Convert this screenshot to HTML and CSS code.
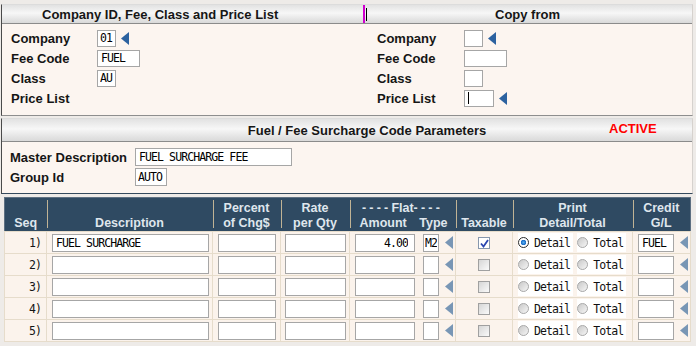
FILE: index.html
```html
<!DOCTYPE html>
<html lang="en">
<head>
    <meta charset="UTF-8">
    <title>Fuel / Fee Surcharge Code Parameters</title>
    <link rel="stylesheet" href="styles.css">
</head>
<body>
    <div class="screen">
        <!-- key fields + copy from -->
        <section class="panel panel-keys">
            <div class="bar bar-split">
                <div class="bar-left">Company ID, Fee, Class and Price List</div>
                <span class="mark-magenta"></span><span class="mark-caret"></span>
                <div class="bar-right">Copy from</div>
            </div>
            <div class="panel-body keys-body">
                <div class="fields fields-left">
                    <label>Company</label>
                    <div class="fld-line"><input class="fld w19" value="01"><svg class="arrow" width="8" height="13"><path d="M8 0L0 6.5L8 13Z"/></svg></div>
                    <label>Fee Code</label>
                    <div class="fld-line"><input class="fld w43" value="FUEL"></div>
                    <label>Class</label>
                    <div class="fld-line"><input class="fld w19" value="AU"></div>
                    <label>Price List</label>
                    <div class="fld-line"></div>
                </div>
                <div class="fields fields-right">
                    <label>Company</label>
                    <div class="fld-line"><input class="fld w19" value=""><svg class="arrow" width="8" height="13"><path d="M8 0L0 6.5L8 13Z"/></svg></div>
                    <label>Fee Code</label>
                    <div class="fld-line"><input class="fld w43" value=""></div>
                    <label>Class</label>
                    <div class="fld-line"><input class="fld w19" value=""></div>
                    <label>Price List</label>
                    <div class="fld-line"><span class="fld fld-box w30"><span class="caret"></span></span><svg class="arrow" width="8" height="13"><path d="M8 0L0 6.5L8 13Z"/></svg></div>
                </div>
            </div>
        </section>

        <!-- parameters -->
        <section class="panel panel-params">
            <div class="bar bar-params">
                <div class="bar-title">Fuel / Fee Surcharge Code Parameters</div>
                <div class="status">ACTIVE</div>
            </div>
            <div class="panel-body params-body">
                <label>Master Description</label>
                <div class="fld-line"><input class="fld w157" value="FUEL SURCHARGE FEE"></div>
                <label>Group Id</label>
                <div class="fld-line"><input class="fld w32" value="AUTO"></div>
            </div>
        </section>

        <table class="grid">
            <colgroup>
                <col style="width:42px"><col style="width:166px"><col style="width:68px"><col style="width:69px">
                <col style="width:106px"><col style="width:57px"><col style="width:120px"><col style="width:58px">
            </colgroup>
            <thead>
                <tr>
                    <th class="first"><br>Seq</th>
                    <th><br>Description</th>
                    <th>Percent<br>of Chg$</th>
                    <th>Rate<br>per Qty</th>
                    <th><span class="dashes">----</span>Flat<span class="dashes">----</span><div class="th-split"><span>Amount</span><span>Type</span></div></th>
                    <th><br>Taxable</th>
                    <th>Print<br>Detail/Total</th>
                    <th>Credit<br>G/L</th>
                </tr>
            </thead>
            <tbody id="rows"></tbody>
        </table>
    </div>

    <script>
        const rows = [
            { desc: 'FUEL SURCHARGE', amount: '4.00', type: 'M2', taxable: true, detail: true, gl: 'FUEL' },
            { desc: '', amount: '', type: '', taxable: false, detail: false, gl: '' },
            { desc: '', amount: '', type: '', taxable: false, detail: false, gl: '' },
            { desc: '', amount: '', type: '', taxable: false, detail: false, gl: '' },
            { desc: '', amount: '', type: '', taxable: false, detail: false, gl: '' }
        ];

        const arrow = '<svg class="arrow arrow-light" width="8" height="13"><path d="M8 0L0 6.5L8 13Z"/></svg>';
        const check = '<svg width="9" height="9" viewBox="0 0 9 9"><path d="M1 4.5L3.5 7.5L8 1" fill="none" stroke="#2a45b0" stroke-width="1.8"/></svg>';

        const body = document.getElementById('rows');
        rows.forEach((r, i) => {
            const tr = document.createElement('tr');
            tr.innerHTML = `
                <td class="seq">${i + 1})</td>
                <td class="pad"><input class="fld w157" value="${r.desc}"></td>
                <td class="mid"><input class="fld w58" value=""></td>
                <td class="mid"><input class="fld w61" value=""></td>
                <td class="pad"><div class="cell-row"><input class="fld w60 num" value="${r.amount}"><input class="fld w16" value="${r.type}">${arrow}</div></td>
                <td class="mid"><span class="chk ${r.taxable ? 'on' : ''}">${r.taxable ? check : ''}</span></td>
                <td class="pad"><div class="cell-row radios">
                    <span class="opt"><span class="radio ${r.detail ? 'on' : ''}"></span>Detail</span>
                    <span class="opt"><span class="radio"></span>Total</span>
                </div></td>
                <td class="pad"><div class="cell-row"><input class="fld w36" value="${r.gl}">${arrow}</div></td>`;
            body.appendChild(tr);
        });
    </script>
</body>
</html>
```

FILE: styles.css
```css
body {
    margin: 0;
    width: 696px;
    height: 346px;
    overflow: hidden;
    background-color: #eeebe8;
    font-family: "Liberation Sans", Arial, sans-serif;
    color: #151515;
}

.screen {
    padding-top: 4px;
}

.panel {
    margin-left: 1px;
    width: 690px;
    border-left: 1px solid #4a4a4a;
    border-right: 1px solid #d6d2ce;
    border-top: 1px solid #dcdcdc;
}

.bar {
    background: linear-gradient(#e2e2e2, #f7f7f7 45%, #d9d9d9);
    border-bottom: 1px solid #8b8b8b;
    font-size: 13px;
    font-weight: 700;
    color: #161616;
    display: flex;
    align-items: center;
}

.bar-split {
    height: 18px;
}

.bar-left {
    width: 361px;
    padding-left: 40px;
    box-sizing: border-box;
}

.mark-magenta {
    width: 2px;
    height: 18px;
    background-color: #d000d0;
}

.mark-caret {
    width: 1px;
    height: 13px;
    margin-left: 1px;
    background-color: #000;
}

.bar-right {
    flex: 1;
    text-align: center;
    padding-right: 4px;
}

.panel-body {
    background-color: #fcf5f0;
}

.panel-keys {
    border-bottom: 1px solid #8e8e8e;
}

.keys-body {
    display: flex;
    height: 91px;
    box-sizing: border-box;
    padding: 4px 0 0 9px;
}

.fields {
    display: grid;
    grid-template-columns: 86px auto;
    grid-auto-rows: 20px;
    align-items: center;
    font-size: 13px;
    font-weight: 700;
}

.fields-left {
    width: 366px;
}

.fields-right {
    grid-template-columns: 87px auto;
}

.fld-line {
    display: flex;
    align-items: center;
    gap: 5px;
}

.fld {
    height: 17px;
    box-sizing: border-box;
    border: 1px solid #a6a6a6;
    background-color: #fff;
    padding: 0 3px;
    margin: 0;
    font-family: "DejaVu Sans Mono", monospace;
    font-size: 11.5px;
    letter-spacing: -0.9px;
    color: #000;
    outline: none;
}

.fld-box {
    display: flex;
    align-items: center;
}

.caret {
    width: 1px;
    height: 12px;
    background-color: #000;
}

.w16 { width: 16px; padding: 0 1px; }
.w19 { width: 19px; padding: 0 2px; }
.w30 { width: 30px; }
.w32 { width: 32px; padding: 0 2px; }
.w36 { width: 36px; }
.w43 { width: 43px; }
.w58 { width: 58px; }
.w60 { width: 60px; }
.w61 { width: 61px; }
.w157 { width: 157px; }

.num {
    text-align: right;
    padding-right: 6px;
}

.arrow {
    fill: #2c62a0;
    flex: none;
}

.arrow-light {
    fill: #7896b5;
}

.panel-params {
    margin-top: 2px;
    border-bottom: 1px solid #34495c;
}

.bar-params {
    height: 22px;
    position: relative;
}

.bar-title {
    flex: 1;
    text-align: center;
    padding-left: 40px;
}

.status {
    position: absolute;
    left: 607px;
    top: 2px;
    color: #ff0000;
    font-size: 13px;
}

.params-body {
    display: grid;
    grid-template-columns: 125px auto;
    grid-auto-rows: 20px;
    align-items: center;
    padding: 5px 0 6px 8px;
    font-size: 13px;
    font-weight: 700;
}

.params-body .fld {
    height: 18px;
}

.grid {
    margin: 3px 0 0 4px;
    width: 687px;
    table-layout: fixed;
    border-collapse: collapse;
    border: 1px solid #5e7082;
    background-color: #fbf3ec;
}

.grid th {
    height: 29px;
    padding: 3px 0 0;
    background: linear-gradient(#c0b395, #c0b395) left 2px / 1px 28px no-repeat, #2f4a62;
    color: #dfe6ed;
    font-size: 12.5px;
    font-weight: 700;
    line-height: 15px;
    text-align: center;
    vertical-align: top;
}

.grid th.first {
    background: #2f4a62;
}

.dashes {
    letter-spacing: 3.2px;
}

.th-split {
    display: flex;
    justify-content: space-between;
    padding: 0 8px 0 10px;
}

.grid td {
    height: 21px;
    padding: 0;
    border: 1px solid #e6dccb;
    font-family: "DejaVu Sans Mono", monospace;
    font-size: 11.5px;
    letter-spacing: -0.9px;
}

.grid td .fld {
    height: 18px;
    display: block;
}

.grid td.seq {
    text-align: right;
    padding-right: 5px;
}

.grid td.pad {
    padding-left: 5px;
}

.grid td.mid .fld {
    margin: 0 auto;
}

.grid td.mid {
    text-align: center;
}

.cell-row {
    display: flex;
    align-items: center;
    gap: 6px;
}

.cell-row .fld + .fld {
    margin-left: 2px;
}

.chk {
    display: inline-flex;
    align-items: center;
    justify-content: center;
    width: 12px;
    height: 12px;
    box-sizing: border-box;
    border: 1px solid #a0a0a0;
    background: linear-gradient(135deg, #d6d6d6, #fafafa);
    vertical-align: middle;
}

.chk.on {
    border-color: #8797ad;
    background: #fff;
}

.radios {
    gap: 4px;
}

.opt {
    display: flex;
    align-items: center;
    gap: 5px;
    background-color: #fff;
    height: 19px;
    padding-right: 3px;
    color: #111;
}

.radio {
    width: 11px;
    height: 11px;
    box-sizing: border-box;
    border-radius: 50%;
    border: 1px solid #a9a9a9;
    background: linear-gradient(135deg, #c9c9c9, #f6f6f6);
}

.radio.on {
    border-color: #2a2a2a;
    background: radial-gradient(circle, #58aef0 0, #1769c4 2.5px, #fff 3px);
}
```
